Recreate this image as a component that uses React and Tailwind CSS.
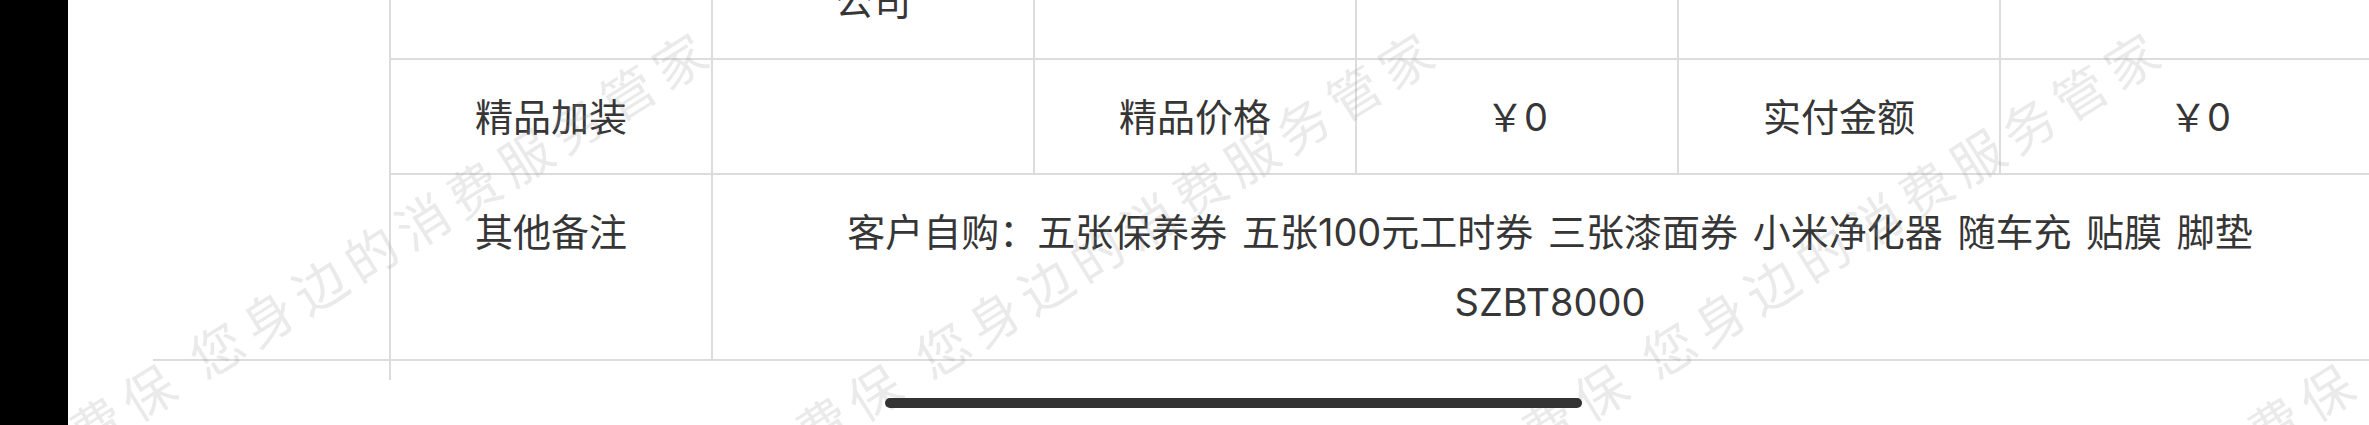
import React from 'react';

// grid line + text colours taken from the screenshot
const LINE = 'border-[#dcdcdc]';
const FONT = "font-['Inter','Noto_Sans_CJK_SC',sans-serif]";

// one table cell, 322px wide with a right rule (the last one is wider, no rule)
function Cell({ children, last, pad = 'pt-[22px] pb-[22px]' }) {
  return (
    <div
      className={`${last ? 'w-[398px]' : 'w-[322px] border-r-2'} ${LINE} ${pad} shrink-0 px-[20px] text-center`}
    >
      {children}
    </div>
  );
}

// diagonal watermark text repeated across the screen
function Watermark({ className }) {
  return (
    <span
      className={`absolute top-[255px] -translate-x-1/2 -translate-y-1/2 -rotate-[32deg] whitespace-nowrap text-[52px] leading-none tracking-[8.6px] text-[rgba(150,150,150,0.2)] font-['Noto_Sans_CJK_SC',sans-serif] ${className}`}
    >
      消费保 您身边的消费服务管家
    </span>
  );
}

export default function App() {
  return (
    <div className={`relative flex h-[425px] w-[2369px] overflow-hidden bg-white text-[38px] leading-[70px] text-[#363636] ${FONT}`}>
      {/* left notch area */}
      <div className="w-[68px] shrink-0 bg-black" />

      <div className="flex-1 pl-[85px] pr-[51px]">
        <div className="-mt-[126px] overflow-hidden">
          {/* previous row, mostly scrolled away */}
          <div className="flex">
            <div className="w-[236px] shrink-0" />
            <div className={`flex shrink-0 border-l-2 border-b-2 ${LINE}`}>
              <Cell>销售门店</Cell>
              <Cell>
                <p>汽车服务有限</p>
                <p>公司</p>
              </Cell>
              <Cell>联系电话</Cell>
              <Cell></Cell>
              <Cell>销售顾问</Cell>
              <Cell last></Cell>
            </div>
          </div>

          {/* 精品加装 */}
          <div className="flex">
            <div className="w-[236px] shrink-0" />
            <div className={`flex shrink-0 border-l-2 border-b-2 ${LINE}`}>
              <Cell pad="pt-[22px] pb-[21px]">精品加装</Cell>
              <Cell pad="pt-[22px] pb-[21px]"></Cell>
              <Cell pad="pt-[22px] pb-[21px]">精品价格</Cell>
              <Cell pad="pt-[22px] pb-[21px]">￥0</Cell>
              <Cell pad="pt-[22px] pb-[21px]">实付金额</Cell>
              <Cell pad="pt-[22px] pb-[21px]" last>￥0</Cell>
            </div>
          </div>

          {/* 其他备注 */}
          <div className={`flex border-b-2 ${LINE}`}>
            <div className="w-[236px] shrink-0" />
            <div className={`flex shrink-0 border-l-2 ${LINE}`}>
              <Cell>其他备注</Cell>
              <div className="w-[1686px] shrink-0 pl-[20px] pr-[32px] pt-[22px] pb-[22px] text-center [word-spacing:4px]">
                <p>客户自购：五张保养券 五张100元工时券 三张漆面券 小米净化器 随车充 贴膜 脚垫</p>
                <p>SZBT8000</p>
              </div>
            </div>
          </div>

          {/* left rule running past the table */}
          <div className="flex">
            <div className="w-[236px] shrink-0" />
            <div className={`h-[19px] border-l-2 ${LINE}`} />
          </div>
        </div>
      </div>

      {/* watermark overlay */}
      <div className="pointer-events-none absolute inset-0">
        <Watermark className="left-[365px]" />
        <Watermark className="left-[1091px]" />
        <Watermark className="left-[1817px]" />
        <Watermark className="left-[2543px]" />
      </div>

      {/* home indicator */}
      <div className="absolute left-[885px] top-[398px] h-[10px] w-[697px] rounded-full bg-[#333333]" />
    </div>
  );
}
